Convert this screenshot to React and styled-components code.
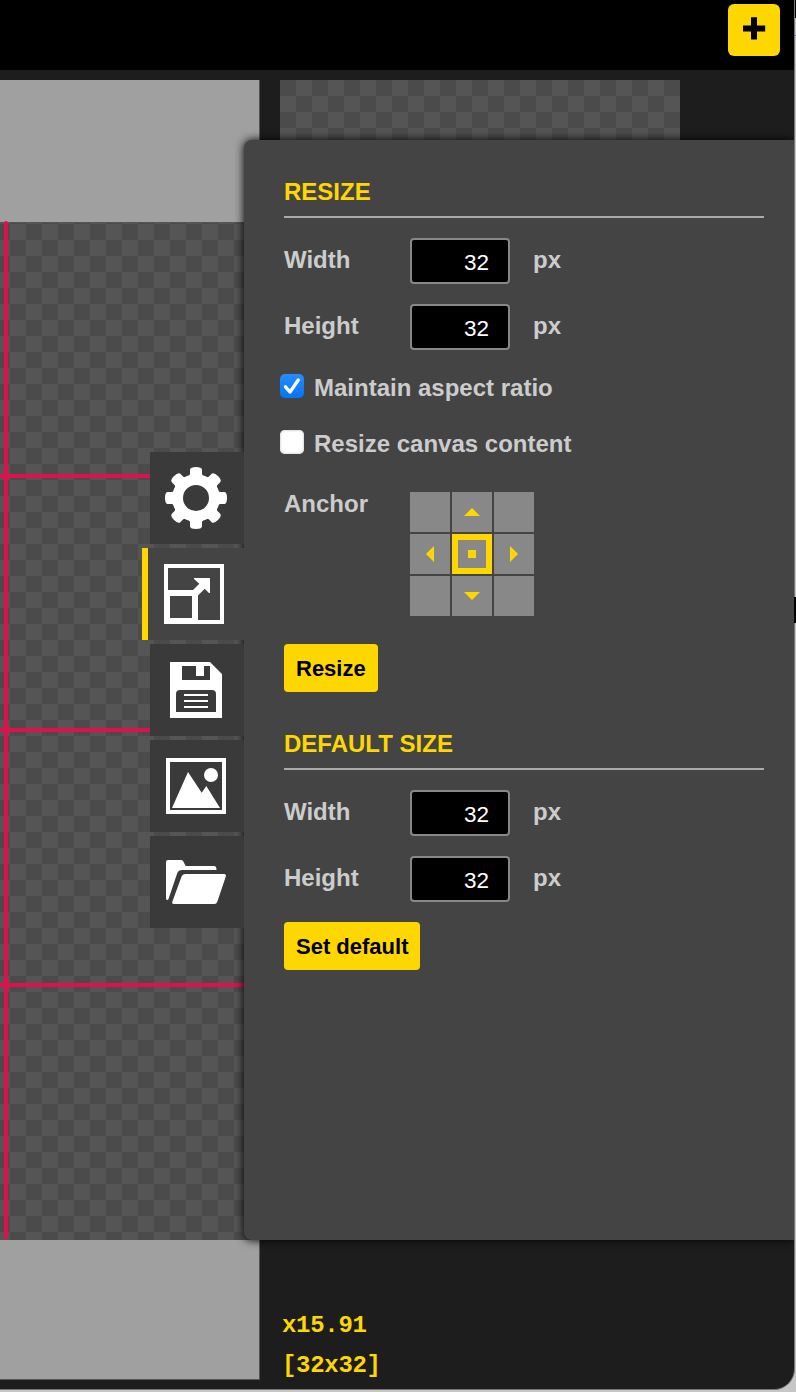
import React, { useState } from 'react';
import styled, { createGlobalStyle, css } from 'styled-components';

const GOLD = '#ffd700';

const GlobalStyle = createGlobalStyle`
  *, *::before, *::after { box-sizing: border-box; }
  body {
    margin: 0;
    overflow: hidden;
    background: #c9c9c9;
    font-family: 'Liberation Sans', Arial, sans-serif;
  }
`;

const Desktop = styled.div`
  position: relative;
  width: 796px;
  height: 1392px;
  overflow: hidden;
  background: #c6c6c6;
`;

const DesktopMark = styled.i`
  position: absolute;
  right: 0;
  top: ${(p) => p.$top}px;
  width: ${(p) => p.$width}px;
  height: ${(p) => p.$height}px;
  background: ${(p) => p.$color};
`;

const Window = styled.div`
  position: relative;
  display: flex;
  flex-direction: column;
  width: 795px;
  height: 1390px;
  overflow: hidden;
  border-right: 1px solid #777;
  border-bottom: 1px solid #777;
  border-bottom-right-radius: 21px;
  background: #1d1d1d;
`;

const Header = styled.header`
  display: flex;
  justify-content: flex-end;
  flex: none;
  height: 70px;
  padding: 4px 14px 0 0;
  background: #000;
`;

const AddButton = styled.button`
  display: grid;
  place-items: center;
  width: 52px;
  height: 52px;
  padding: 0;
  border: 0;
  border-radius: 6px;
  background: ${GOLD};
`;

const Body = styled.main`
  display: flex;
  align-items: flex-start;
  gap: 20px;
  padding-top: 10px;
  flex: 1;
`;

const checker = (first, second) => css`
  background-color: ${first};
  background-image: conic-gradient(${second} 25%, ${first} 0 50%, ${second} 0 75%, ${first} 0);
  background-size: 32px 32px;
`;

const CanvasArea = styled.section`
  width: 260px;
  height: 1300px;
  padding-top: 142px;
  border: solid #555;
  border-width: 0 1px 1px 0;
  background: #a0a0a0;
`;

const Canvas = styled.div`
  position: relative;
  height: 1018px;
  ${checker('#555', '#4b4b4b')}
  background-position: 10px 2px;
  box-shadow: inset 0 1px #555;
`;

const GridLine = styled.i`
  position: absolute;
  background: #e0104f;
  ${(p) =>
    p.$vertical
      ? css`left: 4px; top: -1px; width: 4px; bottom: 1px; border-radius: 2px 2px 0 0;`
      : css`left: 0; right: 0; top: ${p.$at}px; height: 4px;`}
`;

const Preview = styled.section`
  display: flex;
  flex-direction: column;
  width: 400px;
  height: 1306px;
`;

const PreviewImage = styled.div`
  height: 400px;
  ${checker('#4b4b4b', '#555')}
`;

const CanvasInfo = styled.div`
  margin-top: auto;
  padding: 0 0 0 2px;
  color: ${GOLD};
  font: bold 24px/40px 'Liberation Mono', 'Courier New', monospace;
  letter-spacing: -0.3px;
`;

const Drawer = styled.aside`
  position: absolute;
  top: 140px;
  left: 142px;
  right: 0;
  height: 1100px;
  display: flex;
`;

const Tabs = styled.nav`
  position: relative;
  z-index: 1;
  display: flex;
  flex-direction: column;
  align-items: flex-end;
  gap: 4px;
  width: 102px;
  padding-top: 312px;
`;

const Tab = styled.button`
  display: flex;
  justify-content: flex-start;
  width: 94px;
  height: 92px;
  padding: 0;
  border: 0;
  background: #3a3a3a;
  ${(p) =>
    p.$active &&
    css`
      width: 102px;
      padding-left: 2px;
      border-left: 6px solid ${GOLD};
      background: #444;
    `}
`;

const Panel = styled.div`
  flex: 1;
  padding: 32px 30px 0 40px;
  border-radius: 8px 0 0 8px;
  background: #444;
  color: #ccc;
  font-size: 24px;
  font-weight: bold;
  box-shadow: 0 0 10px #000;
`;

const Title = styled.h2`
  height: 46px;
  margin: 0 0 20px;
  border-bottom: 2px solid #aaa;
  color: ${GOLD};
  font-size: 24px;
  line-height: 40px;
`;

const Field = styled.label`
  display: flex;
  height: 46px;
  margin-bottom: 20px;
  line-height: 44px;
`;

const Caption = styled.span`
  width: 126px;
`;

const NumberInput = styled.input`
  width: 100px;
  height: 46px;
  margin-right: 23px;
  padding: 4px 19px 0 0;
  border: 2px solid #888;
  border-radius: 4px;
  outline: 0;
  background: #000;
  color: #fff;
  font: 22.5px 'Liberation Sans', Arial, sans-serif;
  text-align: right;
`;

const CheckRow = styled.label`
  display: flex;
  align-items: flex-start;
  gap: 10px;
  height: 56px;
  margin-left: -4px;
  padding-top: 4px;
  line-height: 28px;
`;

const HiddenCheck = styled.input`
  position: absolute;
  opacity: 0;
`;

const CheckBox = styled.span`
  width: 24px;
  height: 24px;
  border-radius: 5px;
  background: ${(p) => (p.$on ? 'linear-gradient(#268dff, #0575f5)' : '#fff')};
  box-shadow: ${(p) => (p.$on ? 'none' : 'inset 0 0 2px 1px #ddd')};

  svg { display: block; }
`;

const AnchorRow = styled.div`
  display: flex;
  height: 162px;
  padding-top: 10px;
  line-height: 24px;
`;

const AnchorGrid = styled.div`
  display: grid;
  grid-template: repeat(3, 40px) / repeat(3, 40px);
  align-content: start;
  gap: 2px;
`;

const AnchorCell = styled.button`
  display: grid;
  place-items: center;
  padding: 0;
  border: ${(p) => (p.$selected ? `6px solid ${GOLD}` : '0')};
  background: #888;
`;

const ActionButton = styled.button`
  display: block;
  height: 48px;
  margin: 0 0 32px;
  padding: 1px 12px 0;
  border: 0;
  border-radius: 4px;
  background: ${GOLD};
  color: #000;
  font: bold 22px 'Liberation Sans', Arial, sans-serif;
`;

const TabIcon = ({ children }) => (
  <svg width="92" height="92" viewBox="0 0 92 92" fill="#fff">{children}</svg>
);

const GearIcon = () => (
  <TabIcon>
    <g transform="translate(46 46)">
      <circle r="18.4" fill="none" stroke="#fff" strokeWidth="10.8" />
      {[0, 45, 90, 135, 180, 225, 270, 315].map((a) => (
        <path
          key={a}
          transform={`rotate(${a})`}
          d="M-7-22L-6-24V-28.5Q-5.5-31 0-31Q5.5-31 6-28.5V-24L7-22Z"
        />
      ))}
    </g>
  </TabIcon>
);

const ResizeIcon = () => (
  <TabIcon>
    <path
      fillRule="evenodd"
      d="M14 16H74V76H14ZM18 20V42H43L49.3 35.7L44 31V30H60V45H59L54.7 40.7L48 47.5V72H70V20ZM20 48V70H42V48Z"
    />
  </TabIcon>
);

const SaveIcon = () => (
  <TabIcon>
    <path
      fillRule="evenodd"
      d="M20 18H60L72 30V74H20ZM32 22V36H60V22H54V32H46V22ZM30 46Q26 46 26 50V68H66V50Q66 46 62 46Z"
    />
    <path d="M34 50H58V52H34ZM34 56H58V58H34ZM34 62H58V64H34Z" />
  </TabIcon>
);

const ImageIcon = () => (
  <TabIcon>
    <path fillRule="evenodd" d="M16 18H76V74H16ZM20 22V70H72V22Z" />
    <circle cx="61" cy="35" r="7" />
    <path d="M22 68L38 32L51.7 52.7L56.3 46L70 68Z" />
  </TabIcon>
);

const FolderIcon = () => (
  <TabIcon>
    <path d="M18 24H31Q32.5 24 33.2 25.2L35.7 30H64Q66.5 30 66.5 34H32Q28.5 34 27.3 37L18.5 63Q18 64 17 64Q16 64 16 62V26Q16 24 18 24Z" />
    <path d="M35.5 38H74Q76.5 38 75.8 40.5L67.4 65.5Q66.5 68 64.5 68H24Q21.5 68 22.4 65.5L31.4 41Q32.5 38 35.5 38Z" />
  </TabIcon>
);

const TABS = [
  ['Preferences', GearIcon],
  ['Resize', ResizeIcon],
  ['Save', SaveIcon],
  ['Export', ImageIcon],
  ['Import', FolderIcon],
];

const ANCHORS = [
  null, 'M4 16L12 8L20 16Z', null,
  'M8 12L16 4V20Z', 'M8 8H16V16H8Z', 'M8 4L16 12L8 20Z',
  null, 'M4 8H20L12 16Z', null,
];

function SizeField({ caption }) {
  return (
    <Field>
      <Caption>{caption}</Caption>
      <NumberInput defaultValue="32" />
      <span>px</span>
    </Field>
  );
}

function CheckField({ children, initial }) {
  const [on, setOn] = useState(initial);
  return (
    <CheckRow>
      <HiddenCheck type="checkbox" checked={on} onChange={() => setOn(!on)} />
      <CheckBox $on={on}>
        {on && (
          <svg width="24" height="24" viewBox="0 0 24 24">
            <path d="M5.5 12.8L10 18L18.3 6" fill="none" stroke="#fff" strokeWidth="3.3" strokeLinecap="round" strokeLinejoin="round" />
          </svg>
        )}
      </CheckBox>
      <span>{children}</span>
    </CheckRow>
  );
}

export default function App() {
  const [tab, setTab] = useState(1);
  const [anchor, setAnchor] = useState(4);
  return (
    <Desktop>
      <GlobalStyle />
      <Window>
        <Header>
          <AddButton aria-label="Add">
            <svg width="52" height="52"><path d="M15 21.5H23V13.3H29V21.5H37.2V27.4H29V35.6H23V27.4H15Z" /></svg>
          </AddButton>
        </Header>
        <Body>
          <CanvasArea>
            <Canvas>
              <GridLine $at={252} />
              <GridLine $at={506} />
              <GridLine $at={761} />
              <GridLine $vertical />
            </Canvas>
          </CanvasArea>
          <Preview>
            <PreviewImage />
            <CanvasInfo>
              <div>x15.91</div>
              <div>[32x32]</div>
            </CanvasInfo>
          </Preview>
        </Body>
        <Drawer>
          <Tabs>
            {TABS.map(([name, Icon], i) => (
              <Tab key={name} aria-label={name} $active={tab === i} onClick={() => setTab(i)}>
                <Icon />
              </Tab>
            ))}
          </Tabs>
          <Panel>
            <Title>RESIZE</Title>
            <SizeField caption="Width" />
            <SizeField caption="Height" />
            <CheckField initial>Maintain aspect ratio</CheckField>
            <CheckField initial={false}>Resize canvas content</CheckField>
            <AnchorRow>
              <Caption>Anchor</Caption>
              <AnchorGrid>
                {ANCHORS.map((d, i) => (
                  <AnchorCell key={i} aria-label={`Anchor ${i + 1}`} $selected={anchor === i} onClick={() => setAnchor(i)}>
                    {d && <svg width="24" height="24" fill={GOLD}><path d={d} /></svg>}
                  </AnchorCell>
                ))}
              </AnchorGrid>
            </AnchorRow>
            <ActionButton>Resize</ActionButton>
            <Title>DEFAULT SIZE</Title>
            <SizeField caption="Width" />
            <SizeField caption="Height" />
            <ActionButton>Set default</ActionButton>
          </Panel>
        </Drawer>
      </Window>
      <DesktopMark $top={0} $width={1} $height={18} $color="#000" />
      <DesktopMark $top={35} $width={1} $height={1} $color="#5566bb" />
      <DesktopMark $top={597} $width={2} $height={26} $color="#000" />
    </Desktop>
  );
}
